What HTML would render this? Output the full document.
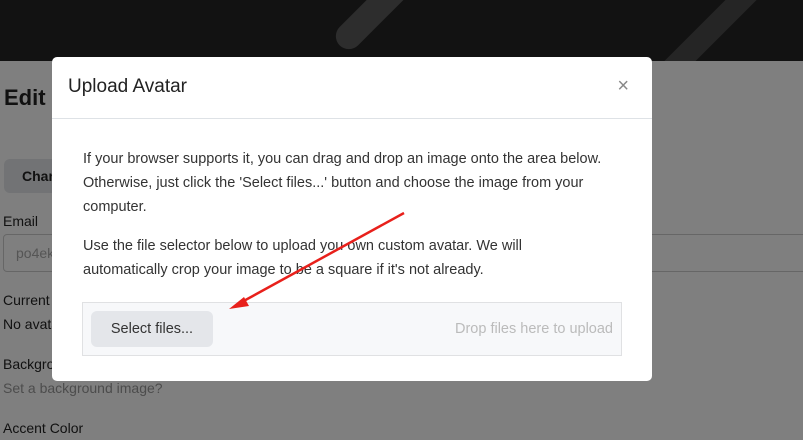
<!DOCTYPE html>
<html><head><style>
*{margin:0;padding:0;box-sizing:border-box}
body{width:803px;height:440px;overflow:hidden;position:relative;background:#fff;font-family:"Liberation Sans",sans-serif;}
.hdr{position:absolute;left:0;top:0;width:803px;height:61px;background:#242424;overflow:hidden}
.bg{position:absolute;left:0;top:61px;width:803px;height:379px;background:#fff}
.t{position:absolute;color:#222;font-size:14px;white-space:nowrap}
.ov{position:absolute;left:0;top:0;width:803px;height:440px;background:rgba(0,0,0,0.5)}
.modal{position:absolute;left:52px;top:57px;width:600px;height:324px;background:#fff;border-radius:5px}
.mh{height:62px;border-bottom:1px solid #dee2e6;position:relative}
.mh h5{position:absolute;left:16px;top:19px;font-size:19px;font-weight:normal;color:#222}
.x{position:absolute;right:23px;top:18px;font-size:20px;color:#888}
.p{position:absolute;left:31px;font-size:14.5px;line-height:24px;color:#333}
.dz{position:absolute;left:30px;top:245px;width:540px;height:54px;background:#f7f8fa;border:1px solid #e0e1e3}
.btn{position:absolute;left:8px;top:8px;width:122px;height:36px;background:#e4e6ea;border-radius:6px;font-size:14.5px;color:#333;text-align:center;line-height:36px}
.dr{position:absolute;right:8px;top:18px;font-size:14.5px;color:#bbb}
</style></head><body>
<div class="hdr">
<div style="position:absolute;left:362px;top:-40px;width:26px;height:100px;background:#5a5a5a;border-radius:13px;transform:rotate(45deg)"></div>
<div style="position:absolute;left:700px;top:-30px;width:22px;height:120px;background:#4a4a4a;transform:rotate(45deg)"></div>
</div>
<div class="bg">
<div class="t" style="left:4px;top:24px;font-size:22px;font-weight:bold">Edit</div>
<div style="position:absolute;left:4px;top:98px;width:100px;height:34px;background:#e4e6ea;border-radius:6px"></div>
<div class="t" style="left:22px;top:107px;font-weight:bold">Change</div>
<div class="t" style="left:3px;top:152px">Email</div>
<div style="position:absolute;left:3px;top:173px;width:820px;height:38px;border:1px solid #ccc;border-radius:4px"></div>
<div class="t" style="left:16px;top:184px;color:#aaa">po4ek</div>
<div class="t" style="left:3px;top:231px">Current avatar</div>
<div class="t" style="left:3px;top:255px">No avatar</div>
<div class="t" style="left:3px;top:295px">Background</div>
<div class="t" style="left:3px;top:319px;color:#999">Set a background image?</div>
<div class="t" style="left:3px;top:359px">Accent Color</div>
</div>
<div class="ov"></div>
<div class="modal">
<div class="mh"><h5>Upload Avatar</h5><div class="x">×</div></div>
<div class="p" style="top:90px">If your browser supports it, you can drag and drop an image onto the area below.<br>Otherwise, just click the 'Select files...' button and choose the image from your<br>computer.</div>
<div class="p" style="top:177px">Use the file selector below to upload you own custom avatar. We will<br>automatically crop your image to be a square if it's not already.</div>
<div class="dz"><div class="btn">Select files...</div><div class="dr">Drop files here to upload</div></div>
</div>
<svg style="position:absolute;left:0;top:0" width="803" height="440">
<line x1="404" y1="213" x2="240" y2="303" stroke="#e8201b" stroke-width="2.5"/>
<polygon points="229,309 244,297 249,306" fill="#e8201b"/>
</svg>
</body></html>
